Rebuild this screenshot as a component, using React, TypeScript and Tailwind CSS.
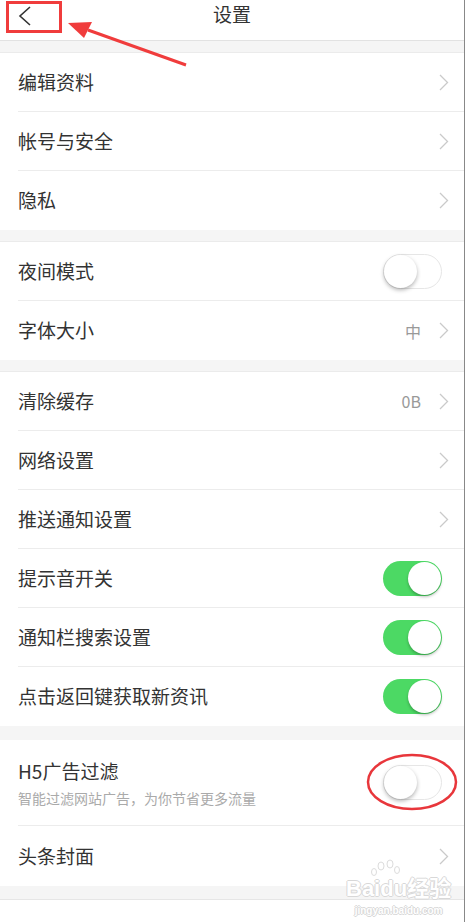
import React from "react";

const font = { fontFamily: '"Noto Sans CJK SC", "Noto Sans", sans-serif' };
const outline = {
    fontFamily: '"Liberation Sans", sans-serif',
    color: "#fff",
    textShadow: "1px 0 #d8d8d8, -1px 0 #d8d8d8, 0 1px #d8d8d8, 0 -1px #d8d8d8",
};

function Chevron() {
    return (
        <svg width="10" height="17" viewBox="0 0 10 17" className="shrink-0">
            <path d="M1 1 L8.5 8.5 L1 16" fill="none" stroke="#cacaca" strokeWidth="1.3" />
        </svg>
    );
}

function Toggle({ on }: { on: boolean }) {
    return (
        <div
            className={
                on
                    ? "relative w-[59px] h-[35px] rounded-full bg-[#4cd964] shrink-0"
                    : "relative w-[59px] h-[35px] rounded-full bg-white border border-[#e6e6e6] shrink-0"
            }
        >
            <div
                className={
                    on
                        ? "absolute top-[1px] right-[1px] w-[33px] h-[33px] rounded-full bg-white shadow-[0_2px_3px_rgba(0,0,0,0.25)]"
                        : "absolute top-[0px] left-[0px] w-[33px] h-[33px] rounded-full bg-white shadow-[0_2px_4px_rgba(0,0,0,0.3)]"
                }
            />
        </div>
    );
}

type Row = { label: string; value?: string; toggle?: boolean; on?: boolean };

function Section({ rows }: { rows: Row[] }) {
    return (
        <div className="bg-white pl-[18px] border-t border-[#ebebeb]">
            {rows.map((r, i) => (
                <div
                    key={r.label}
                    className={
                        (i < rows.length - 1 ? "border-b border-[#ececec] " : "") +
                        (r.toggle ? "pr-[22px] " : "pr-[15px] ") +
                        "h-[59px] flex items-center justify-between"
                    }
                >
                    <span className="text-[19px] text-[#333]">{r.label}</span>
                    {r.toggle ? (
                        <Toggle on={!!r.on} />
                    ) : (
                        <div className="flex items-center gap-[18px]">
                            {r.value && <span className="text-[16px] text-[#999]">{r.value}</span>}
                            <Chevron />
                        </div>
                    )}
                </div>
            ))}
        </div>
    );
}

export default function App() {
    return (
        <div className="relative w-[465px] h-[922px] bg-[#f5f5f5] overflow-hidden border-r border-[#888]" style={font}>
            {/* Header */}
            <div className="relative h-[41px] bg-white border-b border-[#e2e2e2] flex items-center justify-center">
                <svg width="14" height="20" viewBox="0 0 14 20" className="absolute left-[18px] top-[6px]">
                    <path d="M12 1 L2 10 L12 19" fill="none" stroke="#333" strokeWidth="1.6" />
                </svg>
                <span className="text-[19px] text-[#333] -mt-[11px]">设置</span>
            </div>

            <div className="flex flex-col pt-[11px]">
                <Section rows={[{ label: "编辑资料" }, { label: "帐号与安全" }, { label: "隐私" }]} />
                <div className="h-[11px]" />
                <Section rows={[{ label: "夜间模式", toggle: true, on: false }, { label: "字体大小", value: "中" }]} />
                <div className="h-[11px]" />
                <Section
                    rows={[
                        { label: "清除缓存", value: "0B" },
                        { label: "网络设置" },
                        { label: "推送通知设置" },
                        { label: "提示音开关", toggle: true, on: true },
                        { label: "通知栏搜索设置", toggle: true, on: true },
                        { label: "点击返回键获取新资讯", toggle: true, on: true },
                    ]}
                />
                <div className="h-[14px]" />
                <div className="bg-white pl-[18px]">
                    <div className="h-[86px] flex items-center justify-between pr-[22px] border-b border-[#ececec]">
                        <div className="flex flex-col">
                            <span className="text-[19px] text-[#333] leading-[24px]">H5广告过滤</span>
                            <span className="text-[14px] text-[#aaa] leading-[18px] mt-[6px]">智能过滤网站广告，为你节省更多流量</span>
                        </div>
                        <Toggle on={false} />
                    </div>
                    <div className="h-[60px] flex items-center justify-between pr-[15px]">
                        <span className="text-[19px] text-[#333]">头条封面</span>
                        <Chevron />
                    </div>
                </div>
                <div className="h-[13px]" />
                <div className="bg-white h-[30px] border-t border-[#e6e6e6]" />
            </div>

            {/* Annotations */}
            <div className="absolute left-[6px] top-[1px] w-[56px] h-[32px] border-[3px] border-[#f03c3c]" />
            <svg className="absolute left-0 top-0" width="465" height="922" viewBox="0 0 465 922">
                <line x1="186" y1="65" x2="88" y2="30" stroke="#f03c3c" strokeWidth="3" />
                <path d="M68 23 L92 22 L84 38 Z" fill="#f03c3c" />
                <ellipse cx="412" cy="782" rx="44" ry="27" fill="none" stroke="#e8363b" strokeWidth="2.5" />
                <g fill="none" stroke="#dcdcdc" strokeWidth="1">
                    <ellipse cx="381" cy="866" rx="3" ry="4" />
                    <ellipse cx="390" cy="864" rx="3" ry="4" />
                    <ellipse cx="374" cy="872" rx="2.5" ry="3.5" />
                    <ellipse cx="397" cy="870" rx="2.5" ry="3.5" />
                </g>
            </svg>
            <div className="absolute left-[346px] top-[875px] flex flex-col items-center pointer-events-none">
                <span className="text-[22px] font-bold leading-none" style={outline}>
                    Baidu<span style={{ ...outline, ...font }}>经验</span>
                </span>
                <span className="text-[10px] font-bold mt-[3px]" style={outline}>jingyan.baidu.com</span>
            </div>
        </div>
    );
}
